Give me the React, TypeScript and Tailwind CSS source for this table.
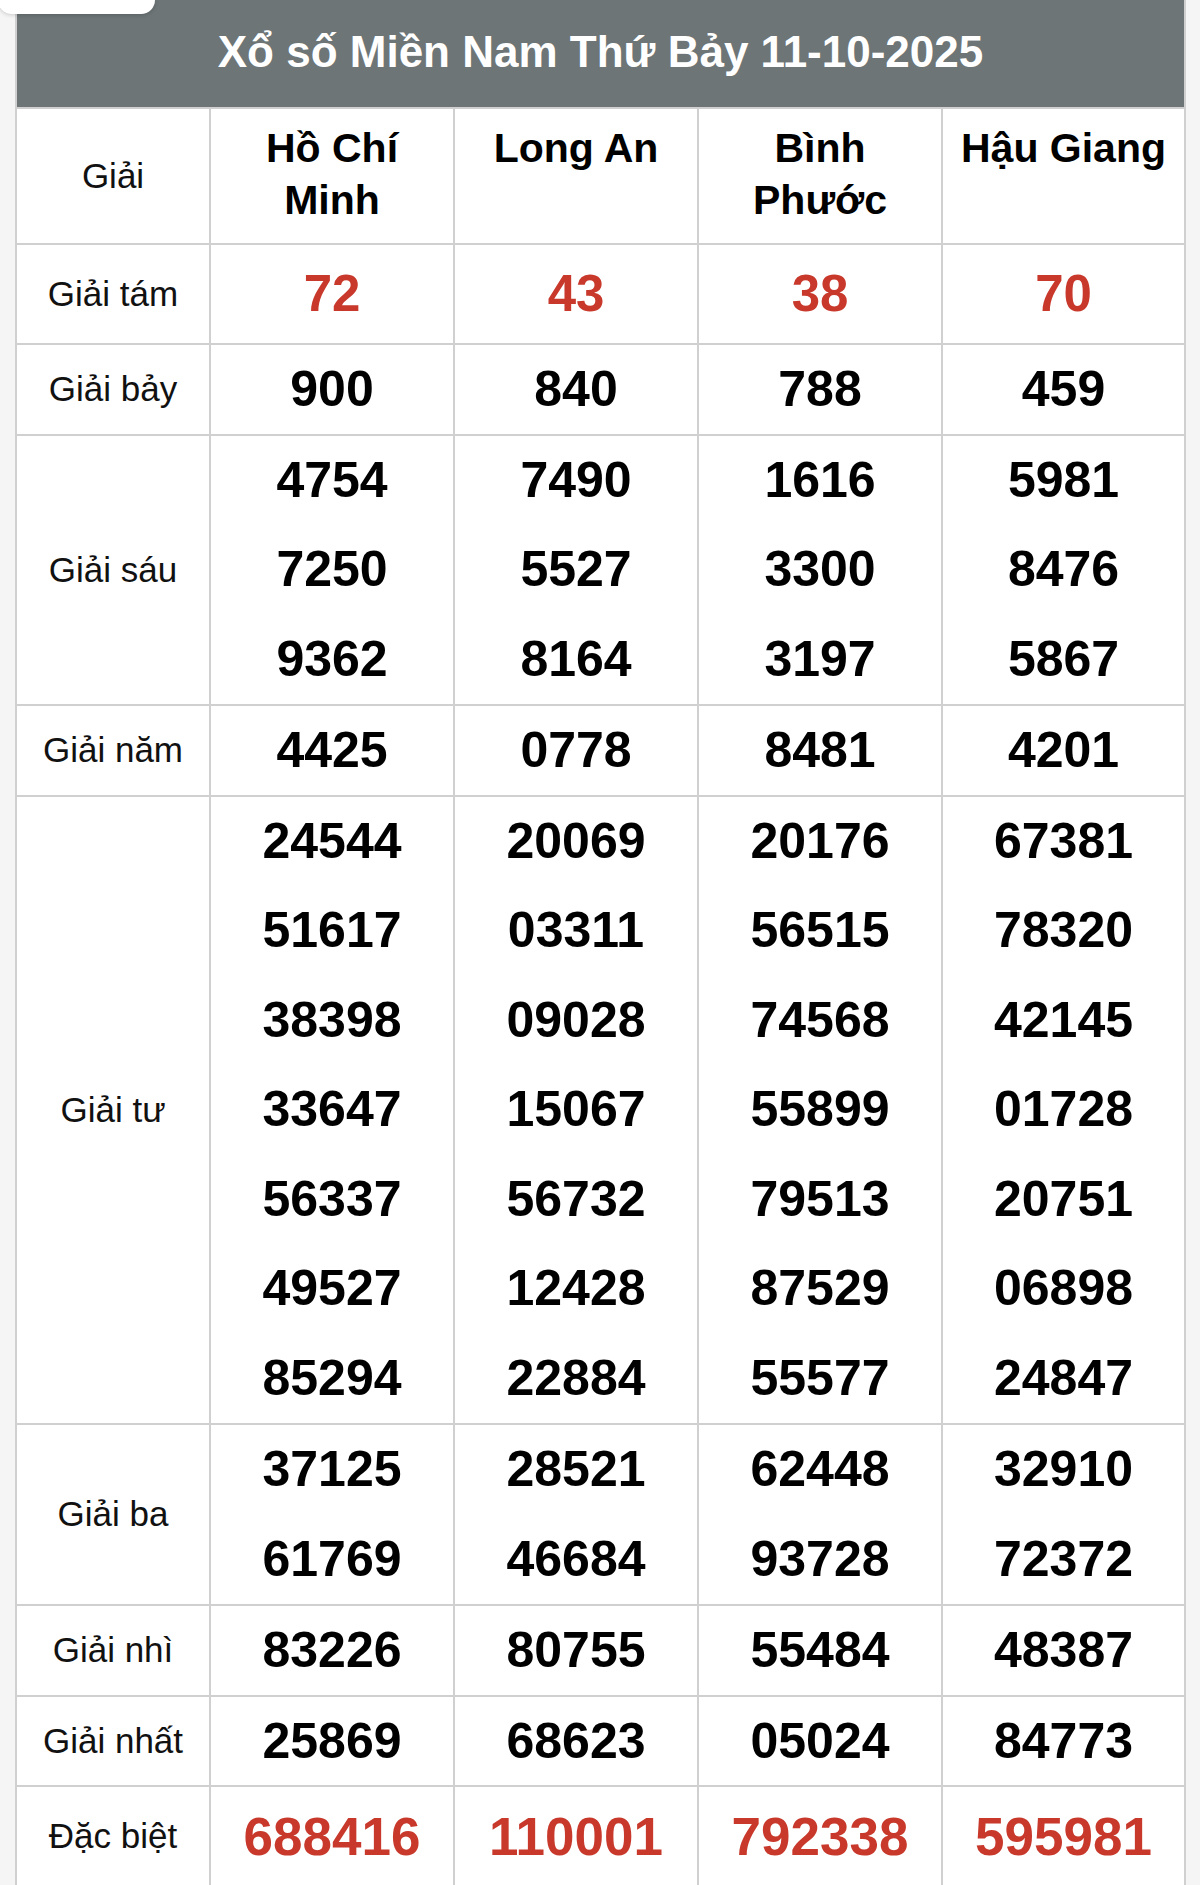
const provinces = ['Hồ Chí Minh', 'Long An', 'Bình Phước', 'Hậu Giang']

type Row = { label: string; kind?: 'small' | 'special'; values: string[][] }

const rows: Row[] = [
  { label: 'Giải tám', kind: 'small', values: [['72'], ['43'], ['38'], ['70']] },
  { label: 'Giải bảy', values: [['900'], ['840'], ['788'], ['459']] },
  {
    label: 'Giải sáu',
    values: [
      ['4754', '7250', '9362'],
      ['7490', '5527', '8164'],
      ['1616', '3300', '3197'],
      ['5981', '8476', '5867'],
    ],
  },
  { label: 'Giải năm', values: [['4425'], ['0778'], ['8481'], ['4201']] },
  {
    label: 'Giải tư',
    values: [
      ['24544', '51617', '38398', '33647', '56337', '49527', '85294'],
      ['20069', '03311', '09028', '15067', '56732', '12428', '22884'],
      ['20176', '56515', '74568', '55899', '79513', '87529', '55577'],
      ['67381', '78320', '42145', '01728', '20751', '06898', '24847'],
    ],
  },
  {
    label: 'Giải ba',
    values: [
      ['37125', '61769'],
      ['28521', '46684'],
      ['62448', '93728'],
      ['32910', '72372'],
    ],
  },
  { label: 'Giải nhì', values: [['83226'], ['80755'], ['55484'], ['48387']] },
  { label: 'Giải nhất', values: [['25869'], ['68623'], ['05024'], ['84773']] },
  { label: 'Đặc biệt', kind: 'special', values: [['688416'], ['110001'], ['792338'], ['595981']] },
]

function NumberCell({ nums, kind }: { nums: string[]; kind?: Row['kind'] }) {
  // single-line rows sit a little tighter than stacked ones
  let cls = nums.length > 1 ? 'text-[50px] leading-[89.5px] text-black' : 'text-[50px] leading-[88.5px] text-black'
  if (kind === 'small') cls = 'text-[51px] leading-[98px] text-[#c8392c]'
  if (kind === 'special') cls = 'text-[53px] leading-[99px] text-[#c8392c]'
  return (
    <td className="border-2 border-[#d0d0d0] p-0 text-center align-middle">
      {nums.map((n, i) => (
        <div key={i} className={`font-bold ${cls}`}>
          {n}
        </div>
      ))}
    </td>
  )
}

export default function App() {
  return (
    <div className="relative min-h-[1885px] bg-[#f5f5f5] pl-[15px] font-['Liberation_Sans',Arial,sans-serif]">
      <div className="absolute -left-[2px] top-0 h-[14px] w-[157px] rounded-b-[14px] bg-white shadow-[0_1px_4px_rgba(0,0,0,0.18)]" />
      <table className="w-[1169px] table-fixed border-collapse bg-white">
        <colgroup>
          <col className="w-[194px]" />
          <col className="w-[244px]" />
          <col className="w-[244px]" />
          <col className="w-[244px]" />
          <col className="w-[243px]" />
        </colgroup>
        <thead>
          <tr>
            <th
              colSpan={5}
              className="h-[108px] border-2 border-t-0 border-[#d0d0d0] bg-[#6d7576] pb-1 text-center text-[44px] font-bold text-white"
            >
              Xổ số Miền Nam Thứ Bảy 11-10-2025
            </th>
          </tr>
          <tr>
            <th className="border-2 border-[#d0d0d0] text-center align-middle text-[35px] font-normal text-[#111]">
              Giải
            </th>
            {provinces.map((p) => (
              <th
                key={p}
                className="border-2 border-[#d0d0d0] px-1 pt-[13px] pb-[17px] text-center align-top text-[41px] font-bold leading-[52px] text-black"
              >
                {p}
              </th>
            ))}
          </tr>
        </thead>
        <tbody>
          {rows.map((r) => (
            <tr key={r.label}>
              <td className="border-2 border-[#d0d0d0] p-0 text-center align-middle text-[35px] text-[#111]">
                {r.label}
              </td>
              {r.values.map((v, i) => (
                <NumberCell key={i} nums={v} kind={r.kind} />
              ))}
            </tr>
          ))}
        </tbody>
      </table>
    </div>
  )
}
